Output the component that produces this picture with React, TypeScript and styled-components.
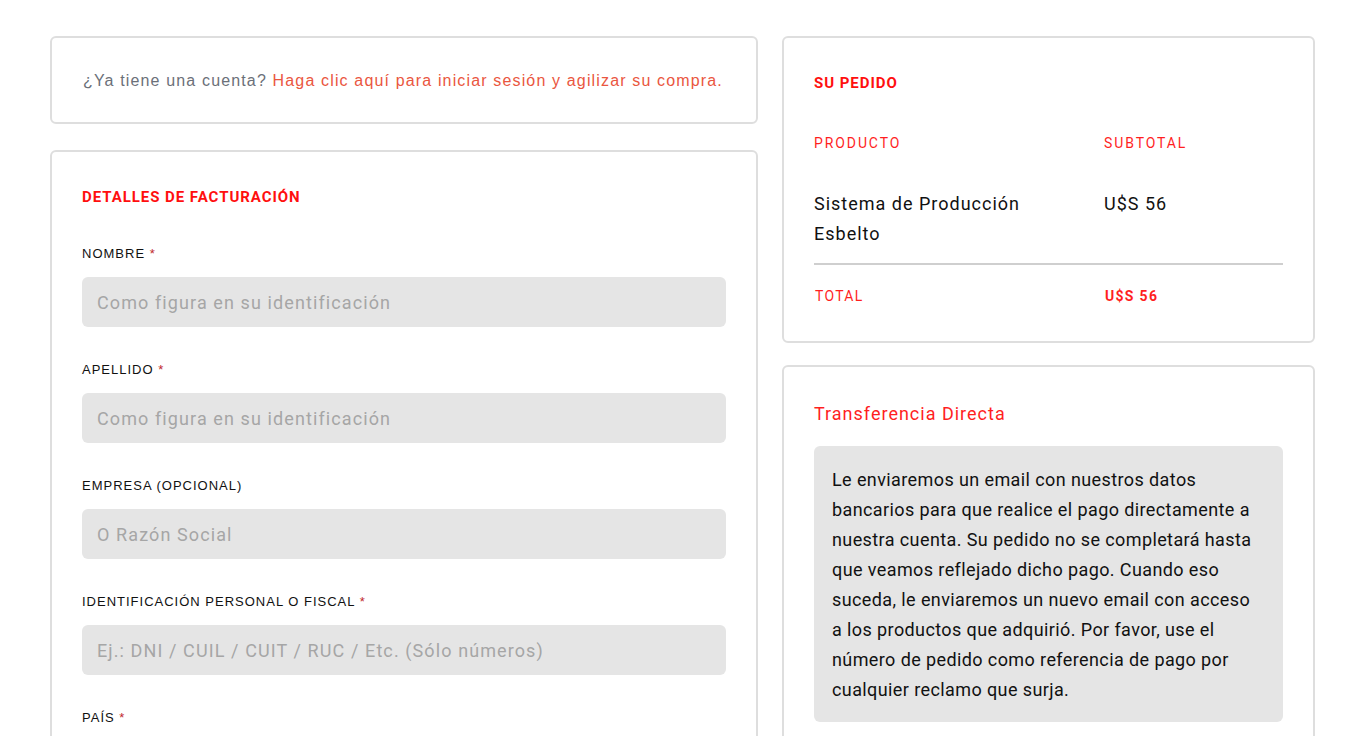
import { createGlobalStyle } from 'styled-components';
import styled from 'styled-components';

const GlobalStyle = createGlobalStyle`
    body {
        margin: 0;
        background: #fff;
        font-family: Roboto, "Liberation Sans", sans-serif;
        color: #111;
    }
    * {
        box-sizing: border-box;
    }
`;

const fields = [
    { label: 'NOMBRE', required: true, placeholder: 'Como figura en su identificación' },
    { label: 'APELLIDO', required: true, placeholder: 'Como figura en su identificación' },
    { label: 'EMPRESA (OPCIONAL)', required: false, placeholder: 'O Razón Social' },
    {
        label: 'IDENTIFICACIÓN PERSONAL O FISCAL',
        required: true,
        placeholder: 'Ej.: DNI / CUIL / CUIT / RUC / Etc. (Sólo números)',
    },
    { label: 'PAÍS', required: true, placeholder: '' },
];

const App = () => {
    return (
        <>
            <GlobalStyle />
            <Page>
                <Column>
                    <Card $pad="29px 31px 27px">
                        <LoginText>
                            ¿Ya tiene una cuenta? <a href="#">Haga clic aquí para iniciar sesión y agilizar su compra.</a>
                        </LoginText>
                    </Card>
                    <Card $pad="33px 30px 40px 30px">
                        <SectionTitle $gap={35}>DETALLES DE FACTURACIÓN</SectionTitle>
                        {fields.map((f) => (
                            <Field key={f.label}>
                                <Label>
                                    {f.label} {f.required && <Req>*</Req>}
                                </Label>
                                <Input placeholder={f.placeholder} />
                            </Field>
                        ))}
                    </Card>
                </Column>
                <Side>
                    <Card $pad="33px 30px 35px">
                        <SectionTitle $gap={39}>SU PEDIDO</SectionTitle>
                        <OrderTable>
                            <thead>
                                <tr>
                                    <HeadCell>PRODUCTO</HeadCell>
                                    <HeadCell>SUBTOTAL</HeadCell>
                                </tr>
                            </thead>
                            <tbody>
                                <tr>
                                    <ItemCell>Sistema de Producción Esbelto</ItemCell>
                                    <ItemCell>U$S 56</ItemCell>
                                </tr>
                            </tbody>
                            <tfoot>
                                <tr>
                                    <TotalCell>TOTAL</TotalCell>
                                    <TotalCell $strong>U$S 56</TotalCell>
                                </tr>
                            </tfoot>
                        </OrderTable>
                    </Card>
                    <Card $pad="35px 30px 40px">
                        <MethodTitle>Transferencia Directa</MethodTitle>
                        <MethodBox>
                            Le enviaremos un email con nuestros datos bancarios para que realice el pago
                            directamente a nuestra cuenta. Su pedido no se completará hasta que veamos
                            reflejado dicho pago. Cuando eso suceda, le enviaremos un nuevo email con acceso
                            a los productos que adquirió. Por favor, use el número de pedido como referencia
                            de pago por cualquier reclamo que surja.
                        </MethodBox>
                    </Card>
                </Side>
            </Page>
        </>
    );
};

const Page = styled.div`
    display: flex;
    align-items: flex-start;
    gap: 24px;
    padding: 36px 0 0 50px;
    width: 1359px;
`;

const Column = styled.div`
    width: 708px;
    display: flex;
    flex-direction: column;
    gap: 26px;
`;

const Side = styled.div`
    width: 533px;
    display: flex;
    flex-direction: column;
    gap: 22px;
`;

const Card = styled.div<{ $pad: string }>`
    border: 2px solid #dedede;
    border-radius: 6px;
    background: #fff;
    padding: ${(p) => p.$pad};
`;

const LoginText = styled.p`
    margin: 0;
    font-family: "Liberation Sans", Arial, sans-serif;
    font-size: 16px;
    line-height: 28px;
    letter-spacing: 1.15px;
    color: #6b7079;
    a {
        color: #ea5640;
        text-decoration: none;
    }
`;

const SectionTitle = styled.h3<{ $gap: number }>`
    margin: 0 0 ${(p) => p.$gap}px;
    font-size: 15px;
    line-height: 24px;
    font-weight: 700;
    letter-spacing: 0.95px;
    color: #ff0f0f;
`;

const Field = styled.div`
    margin-bottom: 33px;
`;

const Label = styled.label`
    display: block;
    font-family: "Liberation Sans", Arial, sans-serif;
    font-size: 13px;
    line-height: 20px;
    letter-spacing: 1px;
    color: #111;
    margin-bottom: 13px;
`;

const Req = styled.span`
    color: #c0282d;
`;

const Input = styled.input`
    display: block;
    width: 100%;
    height: 50px;
    border: none;
    border-radius: 6px;
    background: #e5e5e5;
    padding: 0 15px;
    font-family: Roboto, "Liberation Sans", sans-serif;
    font-size: 18px;
    letter-spacing: 1.1px;
    outline: none;
    &::placeholder {
        color: #a6a6a6;
    }
`;

const OrderTable = styled.table`
    width: 100%;
    border-collapse: collapse;
`;

const HeadCell = styled.th`
    text-align: left;
    font-weight: 400;
    font-size: 14px;
    line-height: 18px;
    letter-spacing: 1.9px;
    color: #ff1f1f;
    padding: 0 0 37px;
    &:first-child {
        width: 290px;
        padding-right: 40px;
    }
`;

const ItemCell = styled.td`
    vertical-align: top;
    font-size: 18px;
    line-height: 30px;
    letter-spacing: 1px;
    color: #111;
    padding: 0 0 14px;
    border-bottom: 2px solid #cfcfcf;
    &:first-child {
        padding-right: 40px;
    }
`;

const TotalCell = styled.td<{ $strong?: boolean }>`
    font-size: 14px;
    letter-spacing: 1.3px;
    color: #ff1f1f;
    font-weight: ${(p) => (p.$strong ? 700 : 400)};
    padding-top: 22px;
    line-height: 18px;
`;

const MethodTitle = styled.h4`
    margin: 0 0 20px;
    font-size: 18px;
    line-height: 24px;
    font-weight: 400;
    letter-spacing: 1px;
    color: #ff1f1f;
`;

const MethodBox = styled.div`
    background: #e5e5e5;
    border-radius: 6px;
    padding: 19px 18px 17px;
    font-size: 18px;
    line-height: 30px;
    letter-spacing: 0.4px;
    color: #111;
`;

export default App;
